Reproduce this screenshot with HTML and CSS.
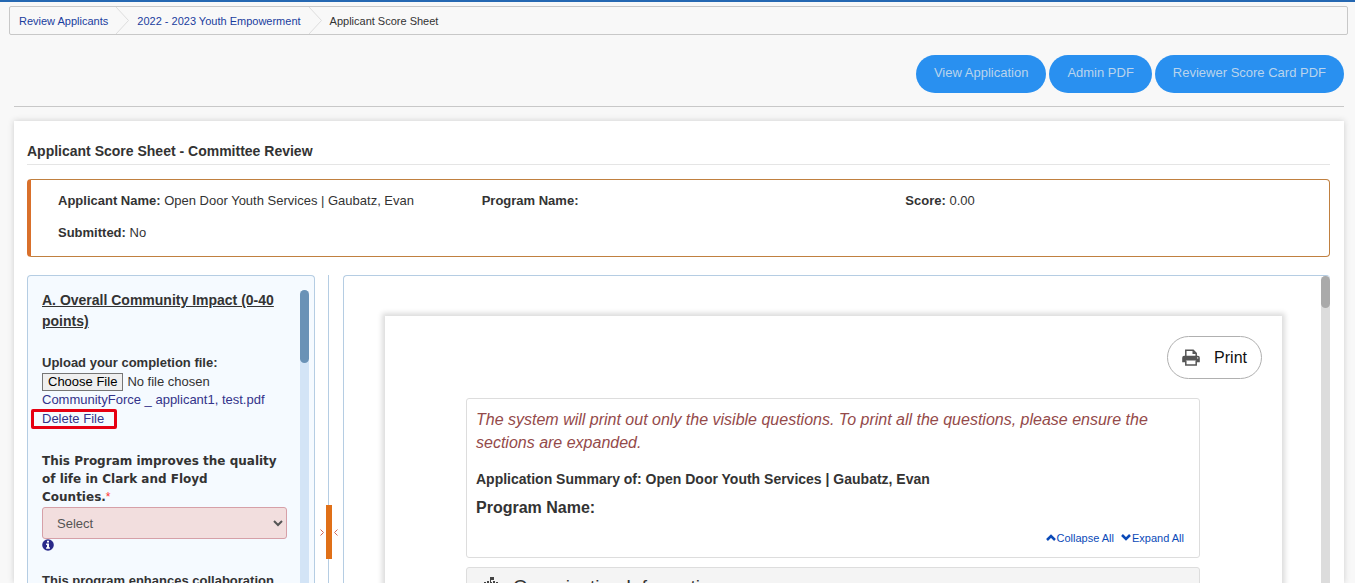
FILE: index.html
```html
<!DOCTYPE html>
<html lang="en">
<head>
<meta charset="utf-8">
<title>Applicant Score Sheet</title>
<link rel="stylesheet" href="styles.css">
</head>
<body>
<div class="page">
  <nav class="breadcrumb" aria-label="Breadcrumb">
    <a href="#">Review Applicants</a>
    <svg class="crumb-sep" viewBox="0 0 13 27" aria-hidden="true"><path d="M0 0L12.500 13.500L0 27"/></svg>
    <a href="#">2022 - 2023 Youth Empowerment</a>
    <svg class="crumb-sep" viewBox="0 0 13 27" aria-hidden="true"><path d="M0 0L12.500 13.500L0 27"/></svg>
    <span>Applicant Score Sheet</span>
  </nav>

  <div class="toolbar">
    <button type="button">View Application</button>
    <button type="button">Admin PDF</button>
    <button type="button">Reviewer Score Card PDF</button>
  </div>

  <main class="sheet">
    <h1>Applicant Score Sheet - Committee Review</h1>

    <section class="summary">
      <div><b>Applicant Name:</b> Open Door Youth Services | Gaubatz, Evan</div>
      <div><b>Program Name:</b></div>
      <div><b>Score:</b> 0.00</div>
      <div><b>Submitted:</b> No</div>
    </section>

    <div class="split">
      <form class="questions">
        <div class="questions-body">
          <h2>A. Overall Community Impact (0-40 points)</h2>
          <div class="upload">
            <label for="completion">Upload your completion file:</label>
            <input type="file" id="completion">
            <a href="#">CommunityForce _ applicant1, test.pdf</a>
            <a href="#" class="delete">Delete File</a>
          </div>
          <div class="rating">
            <label for="quality">This Program improves the quality of life in Clark and Floyd Counties.<span class="required">*</span></label>
            <select id="quality"><option>Select</option></select>
            <svg class="info" viewBox="0 0 12 12" aria-hidden="true"><circle cx="6" cy="6" r="5.800"/><path d="M5 1.800h2v1.800H5zM4.100 4.600H7v3.600h.9v1.500H4.100V8.200H5V6.100h-.9z"/></svg>
          </div>
          <p class="next">This program enhances collaboration</p>
        </div>
        <div class="track blue"><div class="thumb"></div></div>
      </form>

      <div class="divider">
        <svg class="arrow" viewBox="0 0 4 7" aria-hidden="true"><path d="M.5.500L3.500 3.500L.5 6.500"/></svg>
        <span class="handle"></span>
        <svg class="arrow" viewBox="0 0 4 7" aria-hidden="true"><path d="M3.500.500L.5 3.500L3.500 6.500"/></svg>
      </div>

      <section class="preview">
        <div class="preview-body">
          <article class="paper">
            <button type="button" class="print">
              <svg viewBox="0 0 18 17" aria-hidden="true"><path class="outline" d="M3.800 7V1.200h7.400l3 3V7M3.800 11.500V16h10.400v-4.500"/><path class="solid" d="M10.500 1l4 4h-4zM2.200 6.800h13.600A2 2 0 0 1 17.800 8.800V13.200H14.200V11.500H3.800v1.700H.2V8.800a2 2 0 0 1 2-2z"/><circle cx="15.700" cy="8.900" r=".7"/></svg>
              Print
            </button>
            <div class="box overview">
              <p class="notice">The system will print out only the visible questions. To print all the questions, please ensure the sections are expanded.</p>
              <h3>Application Summary of: Open Door Youth Services | Gaubatz, Evan</h3>
              <h4>Program Name:</h4>
              <div class="toggles">
                <a href="#"><svg viewBox="0 0 10 7" aria-hidden="true"><path d="M1 6L5 2L9 6"/></svg>Collapse All</a>
                <a href="#"><svg viewBox="0 0 10 7" aria-hidden="true"><path d="M1 1L5 5L9 1"/></svg>Expand All</a>
              </div>
            </div>
            <div class="box section">
              <svg viewBox="0 0 16 16" aria-hidden="true"><path d="M7 0h4v3H8v2H7zM1 5h2v2H1zM4 4h2v3H4zM7 5h2v2H7zM10 4h2v3h-2zM13 5h2v2h-2zM0 8h16v8H0z"/></svg>
              <span>Organization Information</span>
            </div>
          </article>
        </div>
        <div class="track gray"><div class="thumb"></div></div>
      </section>
    </div>
  </main>
</div>
</body>
</html>
```
FILE: styles.css
```css
* { box-sizing: border-box; }

body {
  margin: 0;
  background: #f8f8f8;
  color: #333;
  font: 13px/18px "Liberation Sans", Arial, sans-serif;
}

h1, h2, h3, h4, p { margin: 0; }
a { color: #1a3d9e; text-decoration: none; }

.page {
  display: flex;
  flex-direction: column;
  height: 100vh;
  overflow: hidden;
  border-top: 2px solid #2568b2;
}

.breadcrumb {
  display: flex;
  flex: none;
  align-items: center;
  gap: 8px;
  height: 29px;
  margin: 4px 7px 0 9px;
  padding: 0 9px;
  border: 1px solid #c8c8c8;
  border-radius: 2px;
  font-size: 11px;
}
.crumb-sep { width: 13px; height: 27px; fill: none; stroke: #ddd; }

.toolbar {
  display: flex;
  flex: none;
  justify-content: flex-end;
  gap: 3px;
  margin: 20px 11px 0 14px;
  padding-bottom: 13px;
  border-bottom: 1px solid #c8c8c8;
}
.toolbar button {
  height: 38px;
  padding: 0 18px 3px;
  border: 0;
  border-radius: 19px;
  background: #2990f0;
  color: #b9d4ed;
  font: 13px "Liberation Sans", Arial, sans-serif;
}

.sheet {
  display: flex;
  flex: 1;
  flex-direction: column;
  min-height: 0;
  margin: 14px 11px 0 14px;
  padding: 20px 14px 0 13px;
  background: #fff;
  box-shadow: 0 0 6px #ccc;
}
.sheet h1 {
  flex: none;
  padding-bottom: 3px;
  border-bottom: 1px solid #e5e5e5;
  font-size: 14px;
  line-height: 20px;
}

.summary {
  display: grid;
  flex: none;
  grid-template-columns: repeat(3, 1fr);
  row-gap: 14px;
  margin: 14px 0 18px;
  padding: 12px 0 14px 27px;
  border: 1px solid #c08040;
  border-left: 4px solid #d9702b;
  border-radius: 4px;
}

.split { display: flex; flex: 1; min-height: 0; }

.questions {
  display: flex;
  flex: none;
  width: 288px;
  padding: 14px 5px 0 14px;
  border: 1px solid #b5cde3;
  border-bottom: 0;
  border-radius: 4px 4px 0 0;
  background: #f5faff;
}
.questions-body { flex: 1; min-height: 0; padding-right: 13px; }
.questions h2 { font-size: 14px; line-height: 21px; text-decoration: underline; }
.upload { display: flex; flex-direction: column; align-items: flex-start; margin-top: 21px; }
.upload label { font-weight: bold; line-height: 20px; }
.upload input { width: 100%; height: 18px; font: 13px/16px "Liberation Sans", Arial, sans-serif; color: #333; }
.upload input::file-selector-button {
  height: 18px;
  padding: 0 5px;
  border: 1px solid #767676;
  border-radius: 0;
  background: #efefef;
  font: inherit;
  color: #000;
}
.upload a { color: #33338a; }
.delete {
  margin-left: -11px;
  padding: 0 10px 0 8px;
  border: 3px solid #e60012;
  border-radius: 2px;
  line-height: 14px;
}
.rating { display: flex; flex-direction: column; align-items: flex-start; margin-top: 23px; }
.rating label { padding-right: 8px; font: bold 12px/18px "DejaVu Sans", Verdana, sans-serif; }
.required { color: #f33; font: 12px "Liberation Sans", Arial, sans-serif; }
.rating select {
  width: 100%;
  height: 32px;
  margin-top: 1px;
  padding-left: 10px;
  border: 1px solid #d6a0a8;
  border-radius: 3px;
  background: #f2dede;
  color: #555;
  font: 13px "Liberation Sans", Arial, sans-serif;
}
.info { width: 12px; height: 12px; }
.info circle { fill: #29298a; }
.info path { fill: #fff; }
.next { margin-top: 21px; font-weight: bold; white-space: nowrap; }

.track { flex: none; width: 9px; }
.thumb { border-radius: 5px; }
.blue { background: #d3e4f6; border-radius: 5px 5px 0 0; }
.blue .thumb { height: 73px; background: #6a92b6; }
.gray { background: #dcdcdc; border-radius: 5px 5px 0 0; }
.gray .thumb { height: 32px; background: #aaa; }

.divider {
  display: flex;
  flex: none;
  justify-content: center;
  gap: 2px;
  width: 28px;
  padding-top: 230px;
  background: linear-gradient(#b5cde3, #b5cde3) 13px 0 / 1px 100% no-repeat;
}
.handle { width: 6px; height: 54px; background: #e07018; }
.arrow { width: 4px; height: 7px; margin-top: 24px; fill: none; stroke: #d06a5a; }

.preview {
  display: flex;
  flex: 1;
  min-width: 0;
  border: 1px solid #b5cde3;
  border-width: 1px 0 0 1px;
  border-radius: 4px 4px 0 0;
}
.preview-body { flex: 1; min-width: 0; padding: 40px 39px 0 41px; overflow: hidden; }
.paper {
  display: flex;
  flex-direction: column;
  min-height: 100%;
  padding: 20px 82px 0 81px;
  box-shadow: 0 0 5px 3px #ddd;
}
.print {
  display: flex;
  align-items: center;
  align-self: flex-end;
  gap: 14px;
  height: 43px;
  margin-right: -62px;
  padding: 0 14px;
  border: 1px solid #b0b0b0;
  border-radius: 22px;
  background: #fff;
  color: #111;
  font: 16px "Liberation Sans", Arial, sans-serif;
}
.print svg { width: 18px; height: 17px; }
.print .outline { fill: none; stroke: #555; stroke-width: 1.500; }
.print .solid { fill: #555; }
.print circle { fill: #fff; }
.box { border: 1px solid #ddd; border-radius: 3px; }
.overview { margin-top: 19px; padding: 9px 9px 10px; }
.notice { color: #944a4a; font-size: 16px; font-style: italic; line-height: 23px; }
.overview h3 { margin-top: 15px; font-size: 14px; line-height: 20px; }
.overview h4 { margin-top: 9px; font-size: 16px; line-height: 20px; }
.toggles { display: flex; justify-content: flex-end; gap: 7px; padding: 11px 6px 0 0; font-size: 11px; line-height: 18px; }
.toggles a { color: #0b4ab8; }
.toggles svg { width: 10px; height: 7px; margin-right: 1px; vertical-align: 1px; fill: none; stroke: #0b4ab8; stroke-width: 2.500; }
.section { display: flex; gap: 14px; margin-top: 9px; padding: 7px 16px; background: #f4f4f4; font-size: 19px; line-height: 24px; }
.section svg { width: 16px; height: 16px; margin-top: 2px; fill: #444; }
```
